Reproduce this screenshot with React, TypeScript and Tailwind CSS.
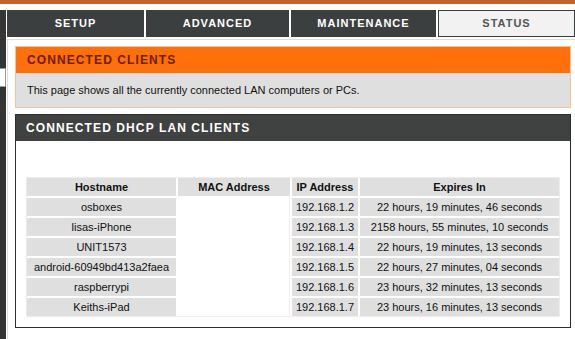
import { Fragment } from "react";

const tabs = [
  { label: "SETUP", w: "w-[137px]", active: false },
  { label: "ADVANCED", w: "w-[143px]", active: false },
  { label: "MAINTENANCE", w: "w-[145px]", active: false },
  { label: "STATUS", w: "w-[137px]", active: true },
];

const clients = [
  { host: "osboxes", ip: "192.168.1.2", expires: "22 hours, 19 minutes, 46 seconds" },
  { host: "lisas-iPhone", ip: "192.168.1.3", expires: "2158 hours, 55 minutes, 10 seconds" },
  { host: "UNIT1573", ip: "192.168.1.4", expires: "22 hours, 19 minutes, 13 seconds" },
  { host: "android-60949bd413a2faea", ip: "192.168.1.5", expires: "22 hours, 27 minutes, 04 seconds" },
  { host: "raspberrypi", ip: "192.168.1.6", expires: "23 hours, 32 minutes, 13 seconds" },
  { host: "Keiths-iPad", ip: "192.168.1.7", expires: "23 hours, 16 minutes, 13 seconds" },
];

export default function App() {
  return (
    <div className="h-[339px] w-[575px] overflow-hidden bg-white font-['Liberation_Sans',Arial,sans-serif] text-black">
      <div className="h-[4px] bg-[#c4612d]" />
      <div className="h-[6px] bg-white" />
      <div className="flex h-[329px]">
        {/* left menu strip */}
        <aside className="flex w-[6px] flex-col bg-[#353535]">
          <div className="h-[58px]" />
          <div className="h-[19px] border-y border-r border-[#9a9a9a] bg-white" />
        </aside>
        <div className="w-px" />
        <main className="flex w-[568px] flex-col">
          <nav className="flex h-[27px] gap-[2px]">
            {tabs.map((t) => (
              <div
                key={t.label}
                className={
                  t.active
                    ? `${t.w} flex items-center justify-center border border-[#3a3d3d] bg-[#f2f2f2] text-[11px] font-bold tracking-[1px] text-[#555]`
                    : `${t.w} flex items-center justify-center bg-[#3c3f3f] text-[11px] font-bold tracking-[1px] text-white`
                }
              >
                {t.label}
              </div>
            ))}
          </nav>
          <div className="mt-[2px] flex-1 border-l border-t border-[#dcdcdc] pl-[7px] pt-[6px]">
            <section className="w-[556px] border border-[#e8c6a4]">
              <div className="flex h-[26px] items-center bg-[#ff6f0a] pl-[11px] text-[12px] font-bold tracking-[1.1px] text-[#6e1c02]">
                CONNECTED CLIENTS
              </div>
              <div className="flex h-[34px] items-center bg-[#dfdfdf] pl-[11px] text-[11px] text-[#111]">
                This page shows all the currently connected LAN computers or PCs.
              </div>
            </section>
            <section className="mt-[6px] w-[556px] border border-[#2e2e2e]">
              <div className="flex h-[26px] items-center bg-[#404241] pl-[10px] text-[12px] font-bold tracking-[1.1px] text-white">
                CONNECTED DHCP LAN CLIENTS
              </div>
              <div className="h-[186px] pl-[10px] pt-[33px]">
                <div className="inline-block border border-[#ececec]">
                  <div className="grid grid-cols-[149px_112px_66px_199px] gap-[2px] text-[11px] text-[#111]">
                    <div className="flex h-[18px] items-center justify-center bg-[#dfdfdf] font-bold">Hostname</div>
                    <div className="flex h-[18px] items-center justify-center bg-[#dfdfdf] font-bold">MAC Address</div>
                    <div className="flex h-[18px] items-center justify-center bg-[#dfdfdf] font-bold">IP Address</div>
                    <div className="flex h-[18px] items-center justify-center bg-[#dfdfdf] font-bold">Expires In</div>
                    {clients.map((c) => (
                      <Fragment key={c.host}>
                        <div className="flex h-[18px] items-center justify-center bg-[#dfdfdf]">{c.host}</div>
                        <div className="h-[18px] border-r border-[#f0f0f0] bg-white" />
                        <div className="flex h-[18px] items-center justify-center bg-[#dfdfdf]">{c.ip}</div>
                        <div className="flex h-[18px] items-center justify-center bg-[#dfdfdf]">{c.expires}</div>
                      </Fragment>
                    ))}
                  </div>
                </div>
              </div>
            </section>
          </div>
        </main>
      </div>
    </div>
  );
}
